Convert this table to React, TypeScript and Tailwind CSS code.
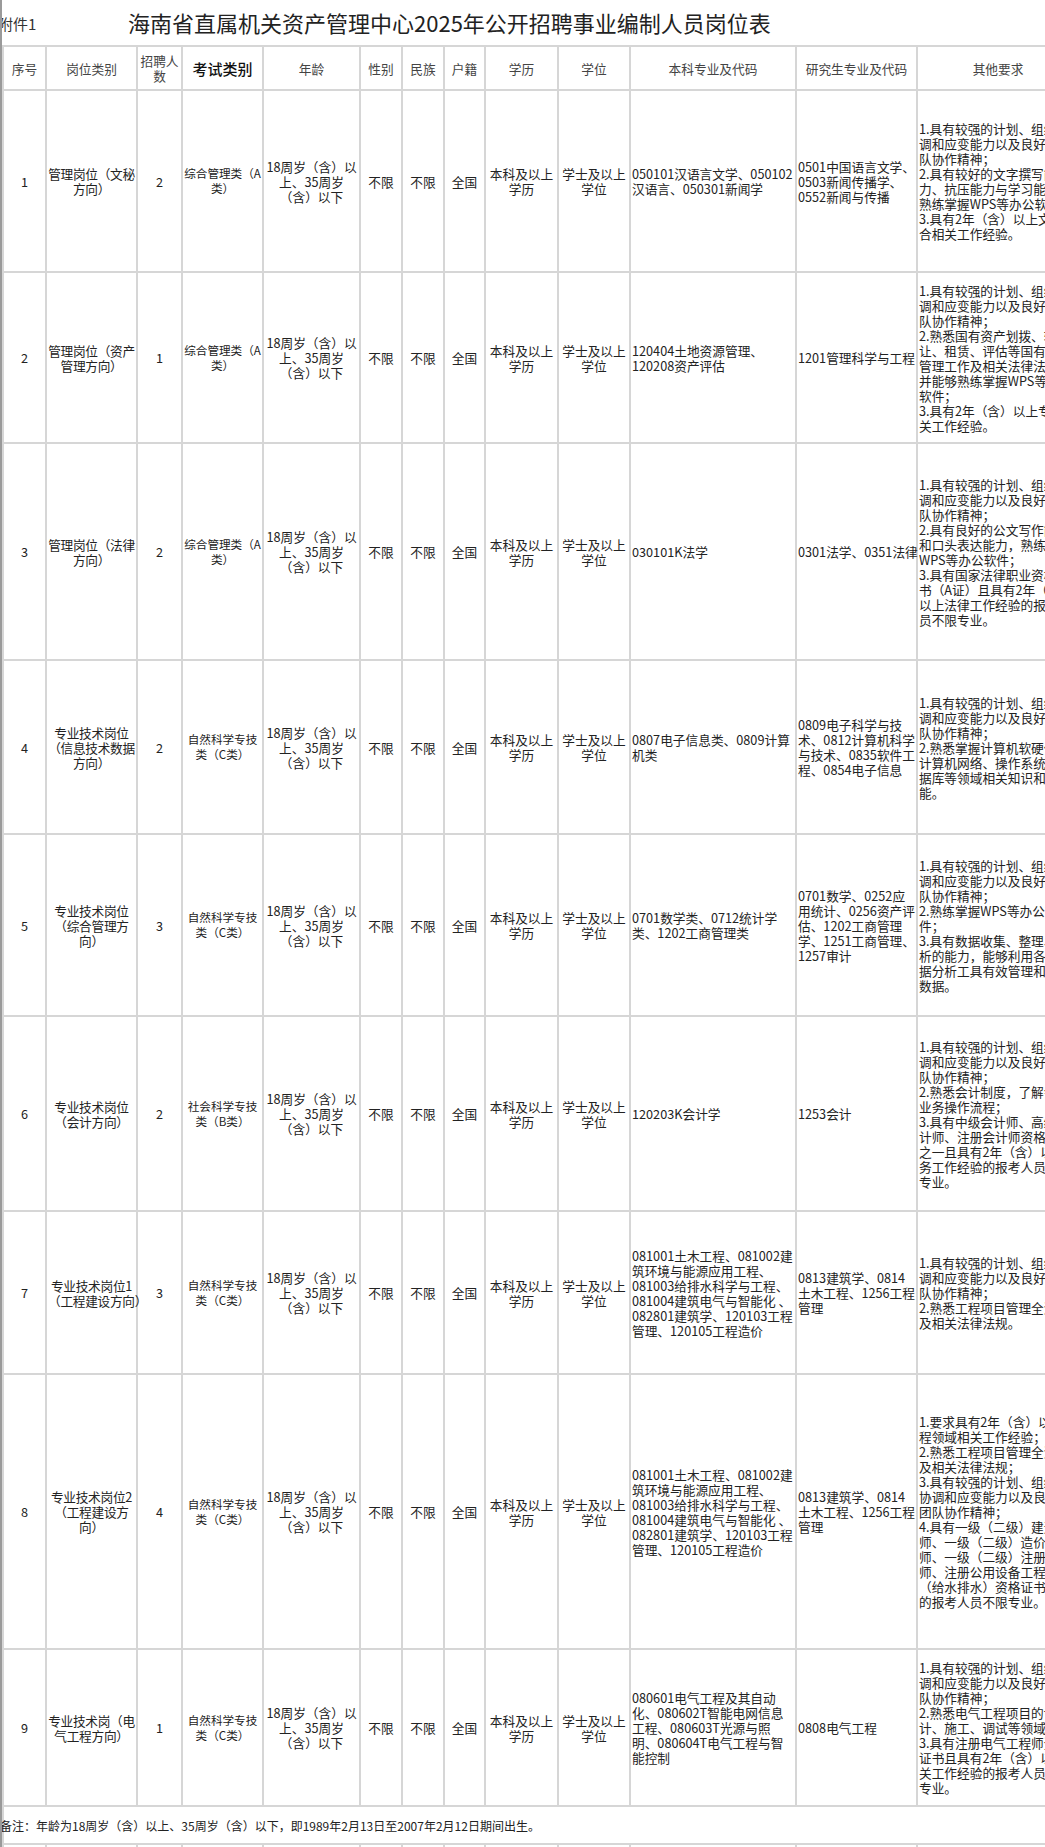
import React from 'react';

type Row = {
  no: string;
  post: string[];
  count: string;
  exam: string[];
  bachelor: string[];
  graduate: string[];
  other: string[];
  h: string;
};

const age = ['18周岁（含）以', '上、35周岁', '（含）以下'];
const common = ['1.具有较强的计划、组织协', '调和应变能力以及良好的团', '队协作精神；'];
const civil = [
  '081001土木工程、081002建',
  '筑环境与能源应用工程、',
  '081003给排水科学与工程、',
  '081004建筑电气与智能化 、',
  '082801建筑学、120103工程',
  '管理、120105工程造价',
];
const civilGrad = ['0813建筑学、0814', '土木工程、1256工程', '管理'];

const rows: Row[] = [
  {
    no: '1',
    post: ['管理岗位（文秘', '方向）'],
    count: '2',
    exam: ['综合管理类（A', '类）'],
    bachelor: ['050101汉语言文学、050102', '汉语言、050301新闻学'],
    graduate: ['0501中国语言文学、', '0503新闻传播学、', '0552新闻与传播'],
    other: [
      ...common,
      '2.具有较好的文字撰写能',
      '力、抗压能力与学习能力，',
      '熟练掌握WPS等办公软件；',
      '3.具有2年（含）以上文字综',
      '合相关工作经验。',
    ],
    h: 'h-[182px]',
  },
  {
    no: '2',
    post: ['管理岗位（资产', '管理方向）'],
    count: '1',
    exam: ['综合管理类（A', '类）'],
    bachelor: ['120404土地资源管理、', '120208资产评估'],
    graduate: ['1201管理科学与工程'],
    other: [
      ...common,
      '2.熟悉国有资产划拨、转',
      '让、租赁、评估等国有资产',
      '管理工作及相关法律法规，',
      '并能够熟练掌握WPS等办公',
      '软件；',
      '3.具有2年（含）以上专业相',
      '关工作经验。',
    ],
    h: 'h-[171px]',
  },
  {
    no: '3',
    post: ['管理岗位（法律', '方向）'],
    count: '2',
    exam: ['综合管理类（A', '类）'],
    bachelor: ['030101K法学'],
    graduate: ['0301法学、0351法律'],
    other: [
      ...common,
      '2.具有良好的公文写作能力',
      '和口头表达能力，熟练掌握',
      'WPS等办公软件；',
      '3.具有国家法律职业资格证',
      '书（A证）且具有2年（含）',
      '以上法律工作经验的报考人',
      '员不限专业。',
    ],
    h: 'h-[217px]',
  },
  {
    no: '4',
    post: ['专业技术岗位', '（信息技术数据', '方向）'],
    count: '2',
    exam: ['自然科学专技', '类（C类）'],
    bachelor: ['0807电子信息类、0809计算', '机类'],
    graduate: ['0809电子科学与技', '术、0812计算机科学', '与技术、0835软件工', '程、0854电子信息'],
    other: [
      ...common,
      '2.熟悉掌握计算机软硬件、',
      '计算机网络、操作系统、数',
      '据库等领域相关知识和技',
      '能。',
    ],
    h: 'h-[174px]',
  },
  {
    no: '5',
    post: ['专业技术岗位', '（综合管理方', '向）'],
    count: '3',
    exam: ['自然科学专技', '类（C类）'],
    bachelor: ['0701数学类、0712统计学', '类、1202工商管理类'],
    graduate: ['0701数学、0252应', '用统计、0256资产评', '估、1202工商管理', '学、1251工商管理、', '1257审计'],
    other: [
      ...common,
      '2.熟练掌握WPS等办公软',
      '件；',
      '3.具有数据收集、整理、分',
      '析的能力，能够利用各类数',
      '据分析工具有效管理和分析',
      '数据。',
    ],
    h: 'h-[182px]',
  },
  {
    no: '6',
    post: ['专业技术岗位', '（会计方向）'],
    count: '2',
    exam: ['社会科学专技', '类（B类）'],
    bachelor: ['120203K会计学'],
    graduate: ['1253会计'],
    other: [
      ...common,
      '2.熟悉会计制度，了解会计',
      '业务操作流程；',
      '3.具有中级会计师、高级会',
      '计师、注册会计师资格证书',
      '之一且具有2年（含）以上财',
      '务工作经验的报考人员不限',
      '专业。',
    ],
    h: 'h-[195px]',
  },
  {
    no: '7',
    post: ['专业技术岗位1', '（工程建设方向）'],
    count: '3',
    exam: ['自然科学专技', '类（C类）'],
    bachelor: civil,
    graduate: civilGrad,
    other: [...common, '2.熟悉工程项目管理全流程', '及相关法律法规。'],
    h: 'h-[163px]',
  },
  {
    no: '8',
    post: ['专业技术岗位2', '（工程建设方', '向）'],
    count: '4',
    exam: ['自然科学专技', '类（C类）'],
    bachelor: civil,
    graduate: civilGrad,
    other: [
      '1.要求具有2年（含）以上工',
      '程领域相关工作经验；',
      '2.熟悉工程项目管理全流程',
      '及相关法律法规；',
      '3.具有较强的计划、组织、',
      '协调和应变能力以及良好的',
      '团队协作精神；',
      '4.具有一级（二级）建造',
      '师、一级（二级）造价工程',
      '师、一级（二级）注册建筑',
      '师、注册公用设备工程师',
      '（给水排水）资格证书之一',
      '的报考人员不限专业。',
    ],
    h: 'h-[275px]',
  },
  {
    no: '9',
    post: ['专业技术岗（电', '气工程方向）'],
    count: '1',
    exam: ['自然科学专技', '类（C类）'],
    bachelor: [
      '080601电气工程及其自动',
      '化、080602T智能电网信息',
      '工程、080603T光源与照',
      '明、080604T电气工程与智',
      '能控制',
    ],
    graduate: ['0808电气工程'],
    other: [
      ...common,
      '2.熟悉电气工程项目的设',
      '计、施工、调试等领域；',
      '3.具有注册电气工程师资格',
      '证书且具有2年（含）以上相',
      '关工作经验的报考人员不限',
      '专业。',
    ],
    h: 'h-[157px]',
  },
];

const cell = 'border-2 border-[#d6d6d6] px-[1px] py-0 align-middle';

function Lines({ lines }: { lines: string[] }) {
  return (
    <>
      {lines.map((l, i) => (
        <div key={i} className="whitespace-nowrap">
          {l}
        </div>
      ))}
    </>
  );
}

export default function App() {
  return (
    <div
      className="w-[1045px] min-h-[1847px] overflow-hidden bg-white border-l-2 border-[#9a9a9a] text-[#222]"
      style={{ fontFamily: '"Noto Sans CJK SC", "Noto Sans", sans-serif' }}
    >
      <div className="h-[45px] flex items-center">
        <span className="w-[130px] shrink-0 -ml-[4px] text-[15px] text-[#333] pt-[4px]">附件1</span>
        <h1 className="text-[22px] text-[#222] font-normal whitespace-nowrap">
          海南省直属机关资产管理中心2025年公开招聘事业编制人员岗位表
        </h1>
      </div>

      <table className="w-[1076px] table-fixed border-collapse text-[12.7px] leading-[15px]">
        <colgroup>
          <col className="w-[43px]" />
          <col className="w-[91px]" />
          <col className="w-[45px]" />
          <col className="w-[81px]" />
          <col className="w-[97px]" />
          <col className="w-[42px]" />
          <col className="w-[42px]" />
          <col className="w-[41px]" />
          <col className="w-[73px]" />
          <col className="w-[72px]" />
          <col className="w-[166px]" />
          <col className="w-[121px]" />
          <col className="w-[162px]" />
        </colgroup>
        <thead>
          <tr className="h-[44px] text-[#444] text-center">
            <th className={`${cell} font-normal`}>序号</th>
            <th className={`${cell} font-normal`}>岗位类别</th>
            <th className={`${cell} font-normal`}>
              <div>招聘人</div>
              <div>数</div>
            </th>
            <th className={`${cell} font-medium text-[15px] text-[#111]`}>考试类别</th>
            <th className={`${cell} font-normal`}>年龄</th>
            <th className={`${cell} font-normal`}>性别</th>
            <th className={`${cell} font-normal`}>民族</th>
            <th className={`${cell} font-normal`}>户籍</th>
            <th className={`${cell} font-normal`}>学历</th>
            <th className={`${cell} font-normal`}>学位</th>
            <th className={`${cell} font-normal`}>本科专业及代码</th>
            <th className={`${cell} font-normal`}>研究生专业及代码</th>
            <th className={`${cell} font-normal`}>其他要求</th>
          </tr>
        </thead>
        <tbody>
          {rows.map((r) => (
            <tr key={r.no} className={r.h}>
              <td className={`${cell} text-center`}>{r.no}</td>
              <td className={`${cell} text-center tracking-[-0.3px]`}>
                <Lines lines={r.post} />
              </td>
              <td className={`${cell} text-center`}>{r.count}</td>
              <td className={`${cell} text-center text-[11.6px]`}>
                <Lines lines={r.exam} />
              </td>
              <td className={`${cell} text-center`}>
                <Lines lines={age} />
              </td>
              <td className={`${cell} text-center`}>不限</td>
              <td className={`${cell} text-center`}>不限</td>
              <td className={`${cell} text-center`}>全国</td>
              <td className={`${cell} text-center`}>
                <Lines lines={['本科及以上', '学历']} />
              </td>
              <td className={`${cell} text-center`}>
                <Lines lines={['学士及以上', '学位']} />
              </td>
              <td className={`${cell} text-left`}>
                <Lines lines={r.bachelor} />
              </td>
              <td className={`${cell} text-left`}>
                <Lines lines={r.graduate} />
              </td>
              <td className={`${cell} text-left`}>
                <Lines lines={r.other} />
              </td>
            </tr>
          ))}
          <tr className="h-[38px]">
            <td colSpan={13} className={`${cell} text-left text-[12px]`}>
              <span className="-ml-[5px] whitespace-nowrap">
                备注：年龄为18周岁（含）以上、35周岁（含）以下，即1989年2月13日至2007年2月12日期间出生。
              </span>
            </td>
          </tr>
          <tr className="h-[30px]">
            {Array.from({ length: 13 }).map((_, i) => (
              <td key={i} className={cell} />
            ))}
          </tr>
        </tbody>
      </table>
    </div>
  );
}
